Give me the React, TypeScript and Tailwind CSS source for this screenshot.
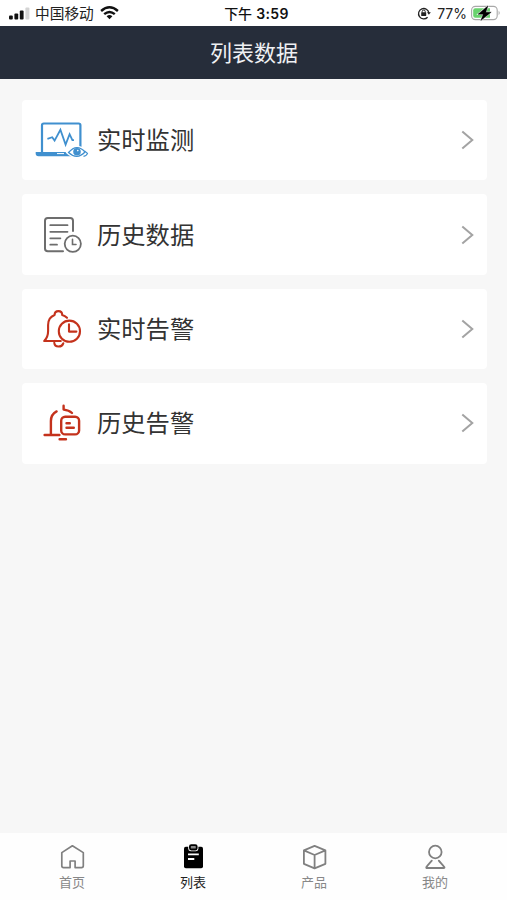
import React from 'react';

interface MenuItem { label: string; icon: React.ReactNode; }
interface TabItem { label: string; icon: React.ReactNode; active?: boolean; }

const MonitorIcon = () => (
  <svg className="w-14 h-20" viewBox="0 0 56 80" fill="none" stroke="#4090cf" strokeWidth="2.2">
    <path d="M8 52V25.2Q8 23.5 9.8 23.5H44.6Q46.4 23.5 46.4 25.2V47" />
    <path d="M1.7 52H36L40 56.3H4.5Q1.7 56.3 1.7 53.5Z" fill="#4090cf" stroke="none" />
    <path d="M23 53.6H30" stroke="#fff" strokeWidth="1" />
    <path d="M13.4 38.8L18.2 37.2L20.6 40.6L26.4 29.8L31.6 44.6L35.6 34.2L38.4 40.2H40" strokeWidth="1.8" />
    <path d="M33 52.5Q43 41 54 52.5Q43 62 33 52.5Z" fill="#fff" stroke="#fff" strokeWidth="2" />
    <path d="M34.5 52.5Q43 43 51 52Q43 60.5 34.5 52.5ZM50.5 51L53.5 53.4Q52.6 56 49.5 56.3" strokeWidth="1.2" />
    <circle cx="43" cy="51.8" r="3.8" fill="#4090cf" stroke="none" />
    <circle cx="43.8" cy="50.6" r="0.8" fill="#fff" stroke="none" />
  </svg>
);

const HistoryIcon = () => (
  <svg className="w-14 h-20" viewBox="0 0 56 80" fill="none" stroke="#6d6d6d" strokeWidth="2" strokeLinecap="round">
    <path d="M39 36V25.7Q39 22.9 36.2 22.9H13.8Q11 22.9 11 25.7V53.5Q11 56.3 13.8 56.3H29" />
    <path d="M16.3 30.2H33.5M16.3 36.8H33.5M16.3 43.3H26.4M16.3 49.7H23" strokeWidth="1.8" />
    <circle cx="38.8" cy="48.8" r="8.1" strokeWidth="1.8" />
    <path d="M38.5 44.4V49.5H42" strokeWidth="1.6" />
  </svg>
);

const AlarmIcon = () => (
  <svg className="w-14 h-20" viewBox="0 0 56 80" fill="none" stroke="#c4321c" strokeWidth="2.1" strokeLinecap="round" strokeLinejoin="round">
    <path d="M33 28.8Q31 26.8 28.2 26C28.2 20.8 20.6 20.8 20.6 26C15.8 27.8 14.1 31.8 14.1 36V42C14.1 46.5 12.8 49.5 10.2 52H26.8" />
    <path d="M20.3 53.8C20.8 58.6 27.8 58.6 29.3 54.3" />
    <circle cx="35.4" cy="42.2" r="10.6" />
    <path d="M35 35.2V42.6H42.4" />
  </svg>
);

const AlarmHistoryIcon = () => (
  <svg className="w-14 h-20" viewBox="0 0 56 80" fill="none" stroke="#c4321c" strokeWidth="2.4" strokeLinecap="round" strokeLinejoin="round">
    <path d="M22.6 28.4C18.6 30.6 16.9 34 16.9 38V51.6M10.6 52H25.4M25.6 56.3H32M29.6 22.8V26.6Q35 27 38 30" />
    <rect x="27.2" y="33.7" width="17.9" height="17.7" rx="4" />
    <path d="M32.5 40.3H35.8M32.5 44.7H39.8" />
  </svg>
);

const menu: MenuItem[] = [
  { label: '实时监测', icon: <MonitorIcon /> },
  { label: '历史数据', icon: <HistoryIcon /> },
  { label: '实时告警', icon: <AlarmIcon /> },
  { label: '历史告警', icon: <AlarmHistoryIcon /> },
];

const tabs: TabItem[] = [
  {
    label: '首页',
    icon: (
      <svg className="w-7 h-7" viewBox="0 0 28 28" fill="none" stroke="#808080" strokeWidth="1.7" strokeLinejoin="round">
        <path d="M14.4 2.8L25.3 9.6V22.8Q25.3 24.6 23.5 24.6H17.1V18H12.1V24.6H5.6Q3.8 24.6 3.8 22.8V9.6Z" />
      </svg>
    ),
  },
  {
    label: '列表',
    active: true,
    icon: (
      <svg className="w-7 h-7" viewBox="0 0 28 28" fill="none">
        <rect x="5" y="3.7" width="19" height="21.6" rx="1.8" fill="#000" />
        <rect x="9.2" y="0.6" width="10.2" height="7.6" rx="2.4" fill="#fff" />
        <rect x="10.9" y="2.1" width="6.8" height="4.4" rx="1.4" fill="#888" stroke="#000" strokeWidth="1.8" />
        <path d="M9 11.4H19.8M9 16H15.3" stroke="#fff" strokeWidth="1.9" />
      </svg>
    ),
  },
  {
    label: '产品',
    icon: (
      <svg className="w-7 h-7" viewBox="0 0 28 28" fill="none" stroke="#808080" strokeWidth="1.8" strokeLinejoin="round">
        <path d="M14.6 2.8L25.4 7.4V20.8L14.6 25.4L3.9 20.8V7.4ZM3.9 7.4L14.6 12L25.4 7.4M14.6 12V25.4" />
      </svg>
    ),
  },
  {
    label: '我的',
    icon: (
      <svg className="w-7 h-7" viewBox="0 0 28 28" fill="none" stroke="#808080" strokeWidth="1.8" strokeLinecap="round" strokeLinejoin="round">
        <circle cx="14.3" cy="9" r="6.3" />
        <path d="M10.8 17.6C9 19.8 6.2 22.6 5.3 24.2Q5 25 6 25H22.8Q23.8 25 23.4 24.2C22.4 22.6 19.6 19.8 17.8 17.6" />
      </svg>
    ),
  },
];

const StatusBar = () => (
  <div className="h-[26px] grid grid-cols-3 items-center bg-white text-[#222] text-[14.7px] leading-[22px]">
    <div className="flex items-center pl-[9px]">
      <svg className="w-[22px] h-4 mr-1" viewBox="0 0 22 16">
        <rect x="0" y="10.6" width="3.8" height="4" rx="1" fill="#111" />
        <rect x="5.4" y="8.6" width="3.8" height="6" rx="1" fill="#111" />
        <rect x="10.8" y="5.6" width="3.8" height="9" rx="1" fill="#111" />
        <rect x="16.4" y="2.4" width="4" height="12.2" rx="1" fill="#d4d4d4" />
      </svg>
      <span className="pt-0.5">中国移动</span>
      <svg className="w-[19px] h-[14px] ml-[6px]" viewBox="0 0 19 14" fill="none" stroke="#111" strokeWidth="2.4">
        <path d="M1.1 5Q9.5 -2.4 17.9 5M4.2 8.2Q9.5 3.6 14.8 8.2" />
        <path d="M9.5 13.2L6.6 10.3Q9.5 7.8 12.4 10.3Z" fill="#111" stroke="none" />
      </svg>
    </div>
    <div className="flex justify-center gap-1 pl-[6px] pt-0.5 font-medium text-[#111]">
      <span className="text-[14px]">下午</span>
      <span className="font-['Inter'] font-semibold text-[14px] tracking-[0.4px]">3:59</span>
    </div>
    <div className="flex items-center justify-end pr-[6px]">
      <svg className="w-[14px] h-[14px] mr-[6px]" viewBox="0 0 14 14" fill="none" stroke="#222" strokeWidth="1.3">
        <path d="M10.6 11.2A5.2 5.2 0 1 1 11.9 7" />
        <path d="M10 6.2H13.8L11.9 8.8Z" fill="#222" stroke="none" />
        <rect x="4.2" y="6.2" width="5" height="3.8" rx="0.6" fill="#222" stroke="none" />
        <path d="M5.2 6.6V5.4Q5.2 4.1 6.7 4.1Q8.2 4.1 8.2 5.4V6.6" strokeWidth="1" />
      </svg>
      <span className="pt-0.5 font-['Inter'] text-[14px]">77%</span>
      <svg className="w-[30px] h-4 ml-1" viewBox="0 0 30 16">
        <rect x="0.6" y="1.4" width="25.6" height="13.2" rx="3.8" fill="#fff" stroke="#a8a8a8" strokeWidth="1.1" />
        <path d="M4.2 3.2H19V12.8H4.2Q2.2 12.8 2.2 10.8V5.2Q2.2 3.2 4.2 3.2Z" fill="#69d26e" />
        <path d="M27.6 5.8Q29.8 8 27.6 10.2Z" fill="#a8a8a8" />
        <path d="M17 0.8L7 9.2H12.2L9.8 15.6L20.2 7.2H14.8Z" fill="#fff" stroke="#fff" strokeWidth="1.2" />
        <path d="M17 0.8L7 9.2H12.2L9.8 15.6L20.2 7.2H14.8Z" fill="#000" stroke="#000" strokeWidth="0.4" />
      </svg>
    </div>
  </div>
);

const App: React.FC = () => {
  return (
    <div className="h-screen w-full flex flex-col overflow-hidden bg-[#f7f7f7] font-['Liberation_Sans','Noto_Sans_CJK_SC',sans-serif]">
      <StatusBar />
      <header className="h-[53px] flex items-center justify-center bg-[#262d3a] text-[#eef0f3] text-[22px] leading-[51px] pt-0.5 pl-px">
        列表数据
      </header>
      <main className="flex-1 flex flex-col gap-[14px] pt-[21px] pl-[22px] pr-5">
        {menu.map(item => (
          <div key={item.label} className="h-[80.4px] flex items-center bg-white rounded-[4px] pl-3 pr-[13px]">
            {item.icon}
            <span className="flex-1 ml-[7px] pt-0.5 text-[24.3px] leading-9 text-[#333]">{item.label}</span>
            <svg className="w-[13px] h-5" viewBox="0 0 13 20" fill="none" stroke="#a3a3a3" strokeWidth="2">
              <path d="M1.3 1.4L11.3 10L1.3 18.6" />
            </svg>
          </div>
        ))}
      </main>
      <nav className="h-[67px] flex bg-[#fefefe] pt-[10px] pl-[11.5px] pr-[11.5px]">
        {tabs.map(tab => (
          <div key={tab.label} className="flex-1 flex flex-col items-center">
            {tab.icon}
            <span className={tab.active ? 'mt-[3px] text-[13px] leading-[18px] text-[#222]' : 'mt-[3px] text-[13px] leading-[18px] text-[#888]'}>
              {tab.label}
            </span>
          </div>
        ))}
      </nav>
    </div>
  );
};

export default App;
